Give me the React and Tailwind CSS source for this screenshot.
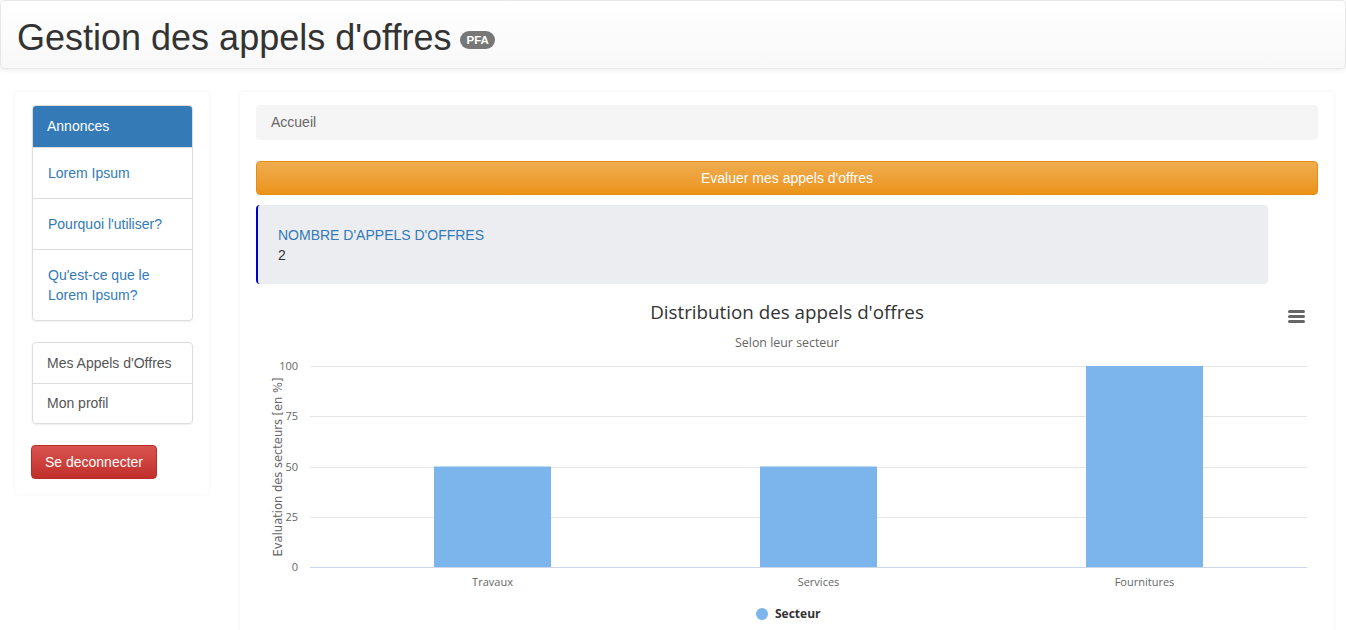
import React from "react";

const annonces = [
  { label: "Lorem Ipsum" },
  { label: "Pourquoi l'utiliser?" },
  { label: "Qu'est-ce que le Lorem Ipsum?" },
];

const bars = [
  { name: "Travaux", value: 50, x: 178 },
  { name: "Services", value: 50, x: 504 },
  { name: "Fournitures", value: 100, x: 830 },
];

const Chart = () => {
  const base = 277;
  const scale = 2.01;
  const ticks = [100, 75, 50, 25, 0];
  const tickY = { 100: 76, 75: 126, 50: 177, 25: 227, 0: 277 };
  return (
    <svg width="1062" height="345" className="block" style={{ fontFamily: '"Open Sans", "DejaVu Sans", sans-serif' }}>
      <text x="531" y="29" textAnchor="middle" fontSize="18.8" fill="#333">
        Distribution des appels d'offres
      </text>
      <text x="531" y="57" textAnchor="middle" fontSize="12.4" fill="#666">
        Selon leur secteur
      </text>
      {/* menu */}
      <rect x="1032" y="20" width="17" height="3" rx="1.5" fill="#666" />
      <rect x="1032" y="25" width="17" height="3" rx="1.5" fill="#666" />
      <rect x="1032" y="30" width="17" height="3" rx="1.5" fill="#666" />
      {ticks.map((t) => (
        <g key={t}>
          <line
            x1="54"
            x2="1051"
            y1={tickY[t] + 0.5}
            y2={tickY[t] + 0.5}
            stroke={t === 0 ? "#ccd6eb" : "#e6e6e6"}
            strokeWidth="1"
          />
          <text x="42" y={tickY[t] + 4} textAnchor="end" fontSize="11" fill="#666">
            {t}
          </text>
        </g>
      ))}
      <text
        transform="translate(26 177) rotate(-90)"
        textAnchor="middle"
        fontSize="11.5"
        fill="#666"
        style={{ fontFamily: '"DejaVu Sans", sans-serif' }}
      >
        Evaluation des secteurs [en %]
      </text>
      {bars.map((b) => (
        <g key={b.name}>
          <rect x={b.x} y={base - b.value * scale} width="117" height={b.value * scale} fill="#7cb5ec" />
          <text x={b.x + 58.5} y="296" textAnchor="middle" fontSize="11" fill="#666">
            {b.name}
          </text>
        </g>
      ))}
      <circle cx="506" cy="324" r="6" fill="#7cb5ec" />
      <text x="519" y="328" fontSize="12" fontWeight="bold" fill="#333">
        Secteur
      </text>
    </svg>
  );
};

const App = () => {
  return (
    <div className="min-h-[630px] bg-white text-[14px] text-[#333]" style={{ fontFamily: '"Liberation Sans", Arial, sans-serif' }}>
      {/* Header */}
      <div className="h-[69px] bg-gradient-to-b from-white to-[#f8f8f8] border border-[#e7e7e7] rounded-[4px] shadow-[0_1px_5px_rgba(0,0,0,0.08)] flex items-center pl-[16px] pt-[7px]">
        <h1 className="text-[36px] leading-none text-[#333] flex items-center">
          Gestion des appels d'offres
          <span className="ml-[9px] mt-[4px] bg-[#777] text-white text-[11.5px] font-bold rounded-[10px] px-[6px] py-[3px] leading-[12px]">
            PFA
          </span>
        </h1>
      </div>

      <div className="flex items-start mt-[23px]">
        {/* Sidebar */}
        <div className="ml-[15px] w-[194px] bg-white rounded-[4px] shadow-[0_0_4px_rgba(0,0,0,0.05)] pt-[13px] pb-[15px] pl-[17px] pr-[16px]">
          <div className="rounded-[4px] border border-[#ddd] shadow-[0_1px_2px_rgba(0,0,0,0.07)] overflow-hidden">
            <div className="bg-[#337ab7] text-white px-[14px] h-[41px] flex items-center">Annonces</div>
            {annonces.map((a) => (
              <div key={a.label} className="border-t border-[#ddd] px-[15px] py-[15px] leading-[20px] text-[#337ab7]">
                {a.label}
              </div>
            ))}
          </div>

          <div className="mt-[21px] rounded-[4px] border border-[#ddd] shadow-[0_1px_2px_rgba(0,0,0,0.07)] overflow-hidden text-[#555]">
            <div className="px-[14px] h-[40px] flex items-center">Mes Appels d'Offres</div>
            <div className="border-t border-[#ddd] px-[14px] h-[40px] flex items-center">Mon profil</div>
          </div>

          <button className="mt-[21px] -ml-[1px] w-[126px] h-[34px] rounded-[4px] border border-[#b92c28] bg-gradient-to-b from-[#d9534f] to-[#c12e2a] text-white">
            Se deconnecter
          </button>
        </div>

        {/* Main */}
        <div className="ml-[31px] w-[1094px] bg-white shadow-[0_0_4px_rgba(0,0,0,0.06)] rounded-[4px] pt-[13px] px-[16px]">
          <div className="h-[35px] bg-[#f5f5f5] rounded-[4px] px-[15px] flex items-center text-[#666]">Accueil</div>

          <button className="mt-[21px] w-full h-[34px] rounded-[4px] border border-[#e38d13] bg-gradient-to-b from-[#f0ad4e] to-[#eb9316] text-white">
            Evaluer mes appels d'offres
          </button>

          <div className="mt-[10px] w-[1012px] h-[79px] bg-[#ecedf1] rounded-[4px] border-l-2 border-[#0000cc] pl-[20px] pt-[20px]">
            <div className="text-[#337ab7] leading-[20px]">NOMBRE D'APPELS D'OFFRES</div>
            <div className="text-[#333] leading-[20px]">2</div>
          </div>

          <div className="mt-[6px]">
            <Chart />
          </div>
        </div>
      </div>
    </div>
  );
};

export default App;
